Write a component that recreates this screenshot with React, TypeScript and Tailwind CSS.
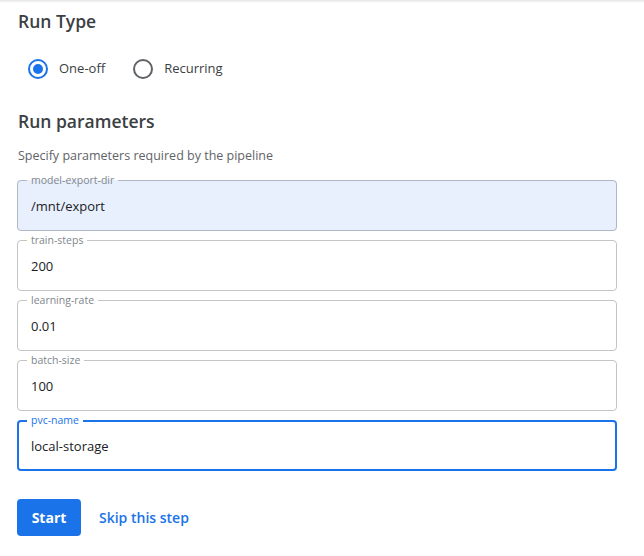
import React, { useState } from 'react';

type Param = { name: string; value: string };

const params: Param[] = [
  { name: 'model-export-dir', value: '/mnt/export' },
  { name: 'train-steps', value: '200' },
  { name: 'learning-rate', value: '0.01' },
  { name: 'batch-size', value: '100' },
  { name: 'pvc-name', value: 'local-storage' },
];

const Radio = ({ label, checked, onClick }: { label: string; checked: boolean; onClick: () => void }) => (
  <button onClick={onClick} className="flex items-center h-[20px] cursor-pointer">
    <span
      className={
        checked
          ? 'flex items-center justify-center w-[20px] h-[20px] rounded-full border-2 border-[#1a73e8]'
          : 'flex items-center justify-center w-[20px] h-[20px] rounded-full border-2 border-[#5f6368]'
      }
    >
      {checked && <span className="w-[10px] h-[10px] rounded-full bg-[#1a73e8]" />}
    </span>
    <span className="ml-[11px] text-[13px] text-[#3c4043]">{label}</span>
  </button>
);

const Field = ({ param, index }: { param: Param; index: number }) => {
  const filled = index === 0;
  const focused = param.name === 'pvc-name';

  let boxClass = 'h-[57px] w-[600px] rounded-[4px] border border-[#c4c4c4] px-[9px] bg-white';
  if (filled) boxClass = 'h-[57px] w-[600px] rounded-[4px] border border-[#b0b8c6] px-[9px] bg-[#e8f0fe]';
  if (focused) boxClass = 'h-[57px] w-[600px] rounded-[4px] border-2 border-[#1a73e8] px-[8px] bg-white';

  return (
    <fieldset className={boxClass}>
      <legend
        className={
          focused
            ? 'px-[4px] text-[10.5px] leading-[13px] text-[#1a73e8]'
            : 'px-[4px] text-[10.5px] leading-[13px] text-[#80868b]'
        }
      >
        {param.name}
      </legend>
      <input
        readOnly
        defaultValue={param.value}
        className="mt-[9px] h-[20px] w-full bg-transparent pl-[4px] text-[13px] leading-[20px] text-[#202124] outline-none"
      />
    </fieldset>
  );
};

export default function App() {
  const [runType, setRunType] = useState<'once' | 'recurring'>('once');

  return (
    <div className="min-h-screen bg-white" style={{ fontFamily: '"Open Sans", Roboto, sans-serif' }}>
      <div className="h-[3px] bg-gradient-to-b from-[#e4e4e4] to-white" />
      <div className="pl-[17px]">
        <h2 className="mt-[6px] pl-[1px] text-[17.5px] leading-[24px] font-semibold text-[#3c4043]">Run Type</h2>
        <div className="mt-[26px] flex items-center pl-[11px]">
          <Radio label="One-off" checked={runType === 'once'} onClick={() => setRunType('once')} />
          <div className="ml-[28px]">
            <Radio label="Recurring" checked={runType === 'recurring'} onClick={() => setRunType('recurring')} />
          </div>
        </div>
        <h2 className="mt-[30px] pl-[1px] text-[17.5px] leading-[24px] font-semibold text-[#3c4043]">
          Run parameters
        </h2>
        <p className="mt-[14px] pl-[1px] text-[12.5px] leading-[18px] text-[#5f6368]">
          Specify parameters required by the pipeline
        </p>
        <div className="mt-[9px] flex flex-col gap-[3px]">
          {params.map((p, i) => (
            <Field key={p.name} param={p} index={i} />
          ))}
        </div>
        <div className="mt-[28px] flex items-center">
          <button className="h-[37px] w-[64px] rounded-[4px] bg-[#1a73e8] text-[14px] font-bold text-white">
            Start
          </button>
          <button className="ml-[18px] text-[14px] font-semibold text-[#1a73e8]">Skip this step</button>
        </div>
      </div>
    </div>
  );
}
